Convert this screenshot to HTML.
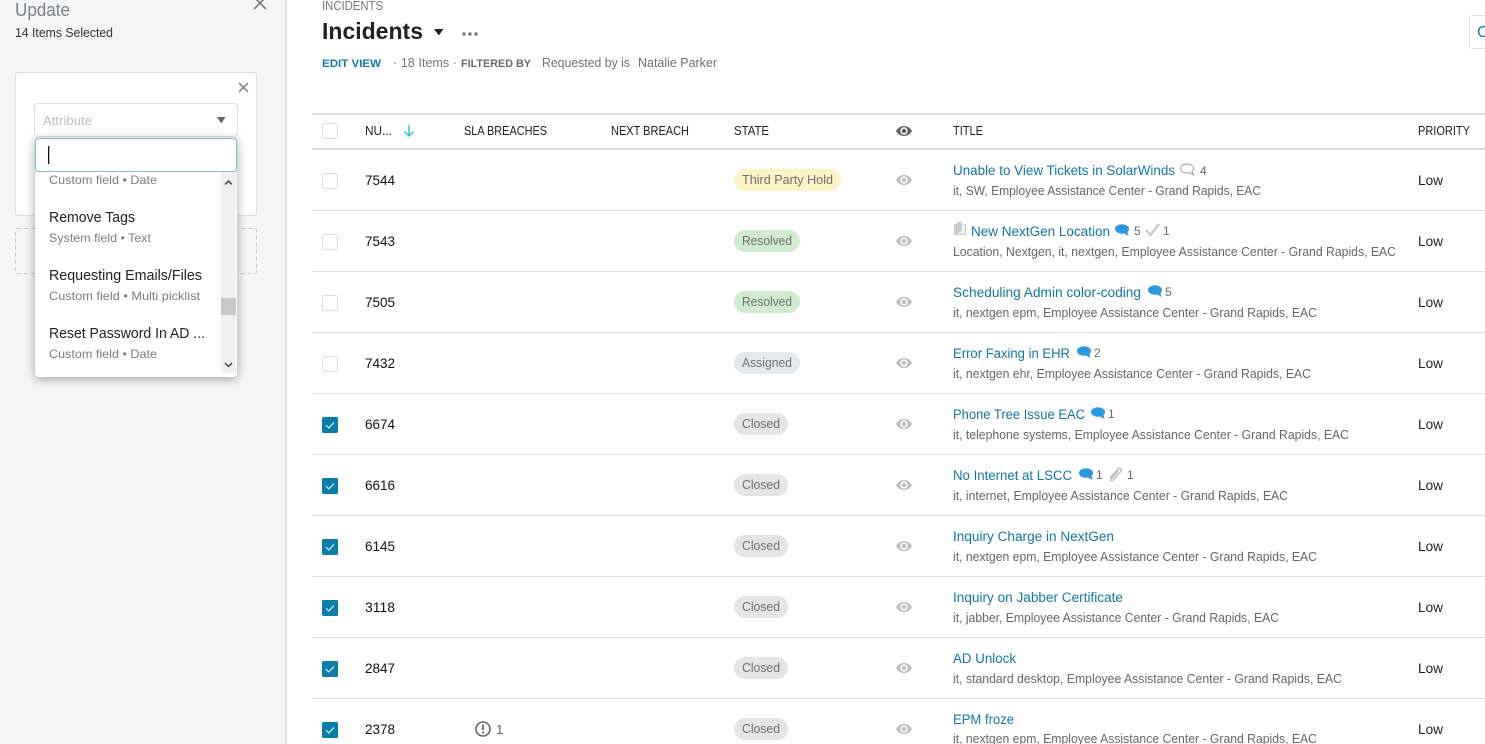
<!DOCTYPE html>
<html lang="en"><head><meta charset="utf-8"><title>Incidents</title>
<style>
html,body{margin:0;padding:0;background:#fff;width:1485px;height:744px;overflow:hidden}
svg{display:block}
text{font-family:"Liberation Sans",sans-serif;font-size:12px;white-space:pre}
.h{fill:#222;font-size:12.500px}.n{fill:#111;font-size:13.500px}.t{fill:#0f77a5;font-size:13.500px}.s{fill:#666;font-size:12.500px}.c{fill:#666}
.p{fill:#6f6f6f;font-size:12.500px}.d{fill:#7c7c7c;font-size:12px}.i{fill:#222;font-size:14.500px}.l{fill:#222;font-size:13.500px}
.line{fill:#dedede}
</style></head><body>
<svg width="1485" height="744" viewBox="0 0 1485 744" xmlns="http://www.w3.org/2000/svg">
<defs>
<symbol id="eye" viewBox="0 0 16 12" width="16" height="12"><path fill="currentColor" d="M0 6C2 2.6 5 1 8 1s6 1.6 8 5c-2 3.400-5 5-8 5S2 9.400 0 6z"/><circle cx="8" cy="6" r="3.700" fill="#fff"/><circle cx="8" cy="6" r="2.200" fill="currentColor"/></symbol>
<symbol id="bub" viewBox="0 0 15 13" width="15" height="13"><ellipse cx="7" cy="5" rx="7" ry="4.800" fill="#2b99e0"/><path d="M8 9l5.500 3L12 6z" fill="#2b99e0"/></symbol>
<symbol id="chk" viewBox="0 0 16 16" width="16" height="16"><rect width="16" height="16" rx="1.500" fill="#0b7dab"/><path d="M4 8.200l2.800 2.800L12 5.500" fill="none" stroke="#fff" stroke-width="1"/></symbol>
<symbol id="box" viewBox="0 0 16 16" width="16" height="16"><rect x=".5" y=".5" width="15" height="15" rx="2" fill="#fff" stroke="#dcdcdc"/></symbol>
</defs>

<!-- left panel -->
<rect width="285" height="744" fill="#f5f5f5"/>
<rect x="285" width="2" height="744" fill="#dcdcdc"/>
<text x="15" y="16" style="font-size:18px" fill="#7b8087" textLength="55" lengthAdjust="spacingAndGlyphs">Update</text>
<text x="15" y="37" fill="#333" style="font-size:12.500px" textLength="98" lengthAdjust="spacingAndGlyphs">14 Items Selected</text>
<path d="M254 -3L266 9M266 -3L254 9" stroke="#777" stroke-width="1.600" fill="none"/>

<rect x="15.500" y="72.500" width="241" height="143" rx="3" fill="#fff" stroke="#dddddd"/>
<path d="M239 83L248 92M248 83L239 92" stroke="#777" stroke-width="1.300" fill="none"/>
<rect x="15.500" y="228.500" width="241" height="45" rx="2" fill="none" stroke="#c8c8c8" stroke-dasharray="4 3"/>
<rect x="34.500" y="103.500" width="203" height="33" rx="4" fill="#fff" stroke="#dddddd"/>
<text x="43" y="125" fill="#bdbdbd" style="font-size:12.500px" textLength="49" lengthAdjust="spacingAndGlyphs">Attribute</text>
<path d="M217 117h8.500l-4.200 6.500z" fill="#666"/>

<g style="filter:drop-shadow(0 2px 5px rgba(0,0,0,.35))"><rect x="35" y="138" width="202" height="239" rx="4" fill="#fff"/></g>
<rect x="35.500" y="138.500" width="201" height="33" rx="3" fill="#fff" stroke="#7fbacd"/>
<rect x="48" y="146" width="1.300" height="18" fill="#111"/>
<rect x="221" y="172" width="15" height="201" fill="#f0f0f0"/>
<rect x="221" y="298" width="15" height="17" fill="#c8c8c8"/>
<path d="M225 184.500l3.500-3.500 3.500 3.500" fill="none" stroke="#444" stroke-width="1.500"/>
<path d="M225 363l3.500 3.500 3.500-3.500" fill="none" stroke="#444" stroke-width="1.500"/>
<text x="49" y="184" class="d" textLength="108" lengthAdjust="spacingAndGlyphs">Custom field • Date</text>
<text x="49" y="222" class="i" textLength="86" lengthAdjust="spacingAndGlyphs">Remove Tags</text>
<text x="49" y="242" class="d" textLength="102" lengthAdjust="spacingAndGlyphs">System field • Text</text>
<text x="49" y="280" class="i" textLength="153" lengthAdjust="spacingAndGlyphs">Requesting Emails/Files</text>
<text x="49" y="300" class="d" textLength="151" lengthAdjust="spacingAndGlyphs">Custom field • Multi picklist</text>
<text x="49" y="338" class="i" textLength="156" lengthAdjust="spacingAndGlyphs">Reset Password In AD ...</text>
<text x="49" y="358" class="d" textLength="108" lengthAdjust="spacingAndGlyphs">Custom field • Date</text>

<!-- header -->
<text x="322" y="10" fill="#777" style="font-size:12.500px" textLength="61" lengthAdjust="spacingAndGlyphs">INCIDENTS</text>
<text x="322" y="39" fill="#222" style="font-size:23px;font-weight:bold" textLength="101" lengthAdjust="spacingAndGlyphs">Incidents</text>
<path d="M434 29h9.500l-4.700 6.500z" fill="#222"/>
<circle cx="464" cy="34" r="1.700" fill="#777"/><circle cx="470" cy="34" r="1.700" fill="#777"/><circle cx="476" cy="34" r="1.700" fill="#777"/>
<text x="322" y="67" fill="#0b7dab" style="font-size:11px;font-weight:bold" textLength="59" lengthAdjust="spacingAndGlyphs">EDIT VIEW</text>
<text x="393" y="67" fill="#777" style="font-size:12.500px" textLength="64" lengthAdjust="spacingAndGlyphs">· 18 Items ·</text>
<text x="461" y="67" fill="#6a6a6a" style="font-size:11px;font-weight:bold" textLength="70" lengthAdjust="spacingAndGlyphs">FILTERED BY</text>
<text x="542" y="67" fill="#6f6f6f" style="font-size:12.500px" textLength="88" lengthAdjust="spacingAndGlyphs">Requested by is</text>
<text x="638" y="67" fill="#6f6f6f" style="font-size:12.500px" textLength="79" lengthAdjust="spacingAndGlyphs">Natalie Parker</text>
<rect x="1469.500" y="15.500" width="30" height="33" rx="4" fill="#fff" stroke="#dddddd"/>
<text x="1477" y="37" fill="#0b7dab" style="font-size:16px">C</text>

<!-- table header -->
<rect x="312" y="113" width="1173" height="2" class="line"/>
<rect x="312" y="148" width="1173" height="2" class="line"/>
<use href="#box" x="322" y="123"/>
<text x="365" y="135" class="h" textLength="27" lengthAdjust="spacingAndGlyphs">NU...</text>
<path d="M409 125v11M404.500 131.500l4.500 4.500 4.500-4.500" fill="none" stroke="#2cc5d5" stroke-width="1.500"/>
<text x="464" y="135" class="h" textLength="83" lengthAdjust="spacingAndGlyphs">SLA BREACHES</text>
<text x="611" y="135" class="h" textLength="78" lengthAdjust="spacingAndGlyphs">NEXT BREACH</text>
<text x="734" y="135" class="h" textLength="35" lengthAdjust="spacingAndGlyphs">STATE</text>
<use href="#eye" x="896" y="125" style="color:#5f5f5f"/>
<text x="953" y="135" class="h" textLength="30" lengthAdjust="spacingAndGlyphs">TITLE</text>
<text x="1418" y="135" class="h" textLength="52" lengthAdjust="spacingAndGlyphs">PRIORITY</text>

<!-- row lines -->
<rect x="312" y="210" width="1173" height="1" class="line"/>
<rect x="312" y="271" width="1173" height="1" class="line"/>
<rect x="312" y="332" width="1173" height="1" class="line"/>
<rect x="312" y="393" width="1173" height="1" class="line"/>
<rect x="312" y="454" width="1173" height="1" class="line"/>
<rect x="312" y="515" width="1173" height="1" class="line"/>
<rect x="312" y="576" width="1173" height="1" class="line"/>
<rect x="312" y="637" width="1173" height="1" class="line"/>
<rect x="312" y="698" width="1173" height="1" class="line"/>

<!-- row 1 -->
<use href="#box" x="322" y="173"/><text x="365" y="185" class="n" textLength="30" lengthAdjust="spacingAndGlyphs">7544</text>
<rect x="734" y="169" width="107" height="22" rx="11" fill="#fdf2c8"/><text x="742" y="184" class="p" textLength="91" lengthAdjust="spacingAndGlyphs">Third Party Hold</text>
<use href="#eye" x="896" y="174" style="color:#bdbdbd"/>
<text x="953" y="175" class="t" textLength="222" lengthAdjust="spacingAndGlyphs">Unable to View Tickets in SolarWinds</text>
<path d="M1187 164c-4 0-6.500 2-6.500 4.500s2.500 4.500 6.500 4.500c1 0 2 0 2.500-.3l4 2.300-1.500-3.500c1-.8 1.500-1.800 1.500-3 0-2.500-2.500-4.500-6.500-4.500z" fill="none" stroke="#999" stroke-width=".9"/>
<text x="1200" y="175" class="c">4</text>
<text x="953" y="195" class="s" textLength="308" lengthAdjust="spacingAndGlyphs">it, SW, Employee Assistance Center - Grand Rapids, EAC</text>
<text x="1418" y="185" class="l" textLength="25" lengthAdjust="spacingAndGlyphs">Low</text>

<!-- row 2 -->
<use href="#box" x="322" y="234"/><text x="365" y="246" class="n" textLength="30" lengthAdjust="spacingAndGlyphs">7543</text>
<rect x="734" y="230" width="66" height="22" rx="11" fill="#cfeccf"/><text x="742" y="245" class="p" textLength="50" lengthAdjust="spacingAndGlyphs">Resolved</text>
<use href="#eye" x="896" y="235" style="color:#bdbdbd"/>
<path d="M954 235v-10.500l7.500-3.500v3.500h4.500V235z" fill="#c5cbce"/><path d="M962 225.500v5l-5 3.500h8v-8.500z" fill="#f1f2f3"/>
<text x="971" y="236" class="t" textLength="139" lengthAdjust="spacingAndGlyphs">New NextGen Location</text>
<use href="#bub" x="1115" y="224"/><text x="1134" y="235" class="c">5</text>
<path d="M1146 230l4.500 5 8.500-11" fill="none" stroke="#c4cacd" stroke-width="2.400"/><text x="1163" y="235" class="c">1</text>
<text x="953" y="256" class="s" textLength="443" lengthAdjust="spacingAndGlyphs">Location, Nextgen, it, nextgen, Employee Assistance Center - Grand Rapids, EAC</text>
<text x="1418" y="246" class="l" textLength="25" lengthAdjust="spacingAndGlyphs">Low</text>

<!-- row 3 -->
<use href="#box" x="322" y="295"/><text x="365" y="307" class="n" textLength="30" lengthAdjust="spacingAndGlyphs">7505</text>
<rect x="734" y="291" width="66" height="22" rx="11" fill="#cfeccf"/><text x="742" y="306" class="p" textLength="50" lengthAdjust="spacingAndGlyphs">Resolved</text>
<use href="#eye" x="896" y="296" style="color:#bdbdbd"/>
<text x="953" y="297" class="t" textLength="188" lengthAdjust="spacingAndGlyphs">Scheduling Admin color-coding</text>
<use href="#bub" x="1148" y="285"/><text x="1165" y="296" class="c">5</text>
<text x="953" y="317" class="s" textLength="364" lengthAdjust="spacingAndGlyphs">it, nextgen epm, Employee Assistance Center - Grand Rapids, EAC</text>
<text x="1418" y="307" class="l" textLength="25" lengthAdjust="spacingAndGlyphs">Low</text>

<!-- row 4 -->
<use href="#box" x="322" y="356"/><text x="365" y="368" class="n" textLength="30" lengthAdjust="spacingAndGlyphs">7432</text>
<rect x="734" y="352" width="66" height="22" rx="11" fill="#e3e9ed"/><text x="742" y="367" class="p" textLength="50" lengthAdjust="spacingAndGlyphs">Assigned</text>
<use href="#eye" x="896" y="357" style="color:#bdbdbd"/>
<text x="953" y="358" class="t" textLength="117" lengthAdjust="spacingAndGlyphs">Error Faxing in EHR</text>
<use href="#bub" x="1077" y="346"/><text x="1094" y="357" class="c">2</text>
<text x="953" y="378" class="s" textLength="358" lengthAdjust="spacingAndGlyphs">it, nextgen ehr, Employee Assistance Center - Grand Rapids, EAC</text>
<text x="1418" y="368" class="l" textLength="25" lengthAdjust="spacingAndGlyphs">Low</text>

<!-- row 5 -->
<use href="#chk" x="322" y="417"/><text x="365" y="429" class="n" textLength="30" lengthAdjust="spacingAndGlyphs">6674</text>
<rect x="734" y="413" width="54" height="22" rx="11" fill="#e5e5e5"/><text x="742" y="428" class="p" textLength="38" lengthAdjust="spacingAndGlyphs">Closed</text>
<use href="#eye" x="896" y="418" style="color:#bdbdbd"/>
<text x="953" y="419" class="t" textLength="132" lengthAdjust="spacingAndGlyphs">Phone Tree Issue EAC</text>
<use href="#bub" x="1091" y="407"/><text x="1108" y="418" class="c">1</text>
<text x="953" y="439" class="s" textLength="396" lengthAdjust="spacingAndGlyphs">it, telephone systems, Employee Assistance Center - Grand Rapids, EAC</text>
<text x="1418" y="429" class="l" textLength="25" lengthAdjust="spacingAndGlyphs">Low</text>

<!-- row 6 -->
<use href="#chk" x="322" y="478"/><text x="365" y="490" class="n" textLength="30" lengthAdjust="spacingAndGlyphs">6616</text>
<rect x="734" y="474" width="54" height="22" rx="11" fill="#e5e5e5"/><text x="742" y="489" class="p" textLength="38" lengthAdjust="spacingAndGlyphs">Closed</text>
<use href="#eye" x="896" y="479" style="color:#bdbdbd"/>
<text x="953" y="480" class="t" textLength="119" lengthAdjust="spacingAndGlyphs">No Internet at LSCC</text>
<use href="#bub" x="1079" y="468"/><text x="1096" y="479" class="c">1</text>
<path d="M1110 478l8-9c2-2 4.500 .5 2.800 2.500l-8.300 9c-1 1-2.500-.3-1.500-1.500l7-8" fill="none" stroke="#b9bfc3" stroke-width="1.400"/><text x="1127" y="479" class="c">1</text>
<text x="953" y="500" class="s" textLength="335" lengthAdjust="spacingAndGlyphs">it, internet, Employee Assistance Center - Grand Rapids, EAC</text>
<text x="1418" y="490" class="l" textLength="25" lengthAdjust="spacingAndGlyphs">Low</text>

<!-- row 7 -->
<use href="#chk" x="322" y="539"/><text x="365" y="551" class="n" textLength="30" lengthAdjust="spacingAndGlyphs">6145</text>
<rect x="734" y="535" width="54" height="22" rx="11" fill="#e5e5e5"/><text x="742" y="550" class="p" textLength="38" lengthAdjust="spacingAndGlyphs">Closed</text>
<use href="#eye" x="896" y="540" style="color:#bdbdbd"/>
<text x="953" y="541" class="t" textLength="161" lengthAdjust="spacingAndGlyphs">Inquiry Charge in NextGen</text>
<text x="953" y="561" class="s" textLength="364" lengthAdjust="spacingAndGlyphs">it, nextgen epm, Employee Assistance Center - Grand Rapids, EAC</text>
<text x="1418" y="551" class="l" textLength="25" lengthAdjust="spacingAndGlyphs">Low</text>

<!-- row 8 -->
<use href="#chk" x="322" y="600"/><text x="365" y="612" class="n" textLength="30" lengthAdjust="spacingAndGlyphs">3118</text>
<rect x="734" y="596" width="54" height="22" rx="11" fill="#e5e5e5"/><text x="742" y="611" class="p" textLength="38" lengthAdjust="spacingAndGlyphs">Closed</text>
<use href="#eye" x="896" y="601" style="color:#bdbdbd"/>
<text x="953" y="602" class="t" textLength="170" lengthAdjust="spacingAndGlyphs">Inquiry on Jabber Certificate</text>
<text x="953" y="622" class="s" textLength="326" lengthAdjust="spacingAndGlyphs">it, jabber, Employee Assistance Center - Grand Rapids, EAC</text>
<text x="1418" y="612" class="l" textLength="25" lengthAdjust="spacingAndGlyphs">Low</text>

<!-- row 9 -->
<use href="#chk" x="322" y="661"/><text x="365" y="673" class="n" textLength="30" lengthAdjust="spacingAndGlyphs">2847</text>
<rect x="734" y="657" width="54" height="22" rx="11" fill="#e5e5e5"/><text x="742" y="672" class="p" textLength="38" lengthAdjust="spacingAndGlyphs">Closed</text>
<use href="#eye" x="896" y="662" style="color:#bdbdbd"/>
<text x="953" y="663" class="t" textLength="63" lengthAdjust="spacingAndGlyphs">AD Unlock</text>
<text x="953" y="683" class="s" textLength="389" lengthAdjust="spacingAndGlyphs">it, standard desktop, Employee Assistance Center - Grand Rapids, EAC</text>
<text x="1418" y="673" class="l" textLength="25" lengthAdjust="spacingAndGlyphs">Low</text>

<!-- row 10 -->
<use href="#chk" x="322" y="722"/><text x="365" y="734" class="n" textLength="30" lengthAdjust="spacingAndGlyphs">2378</text>
<circle cx="483" cy="729" r="7" fill="none" stroke="#666" stroke-width="1.600"/><path d="M483 724.500v5.500" stroke="#666" stroke-width="1.800"/><circle cx="483" cy="732.500" r="1.100" fill="#666"/>
<text x="496" y="734" class="c" style="font-size:13px">1</text>
<rect x="734" y="718" width="54" height="22" rx="11" fill="#e5e5e5"/><text x="742" y="733" class="p" textLength="38" lengthAdjust="spacingAndGlyphs">Closed</text>
<use href="#eye" x="896" y="723" style="color:#bdbdbd"/>
<text x="953" y="724" class="t" textLength="61" lengthAdjust="spacingAndGlyphs">EPM froze</text>
<text x="953" y="743" class="s" textLength="364" lengthAdjust="spacingAndGlyphs">it, nextgen epm, Employee Assistance Center - Grand Rapids, EAC</text>
<text x="1418" y="734" class="l" textLength="25" lengthAdjust="spacingAndGlyphs">Low</text>
</svg>
</body></html>
